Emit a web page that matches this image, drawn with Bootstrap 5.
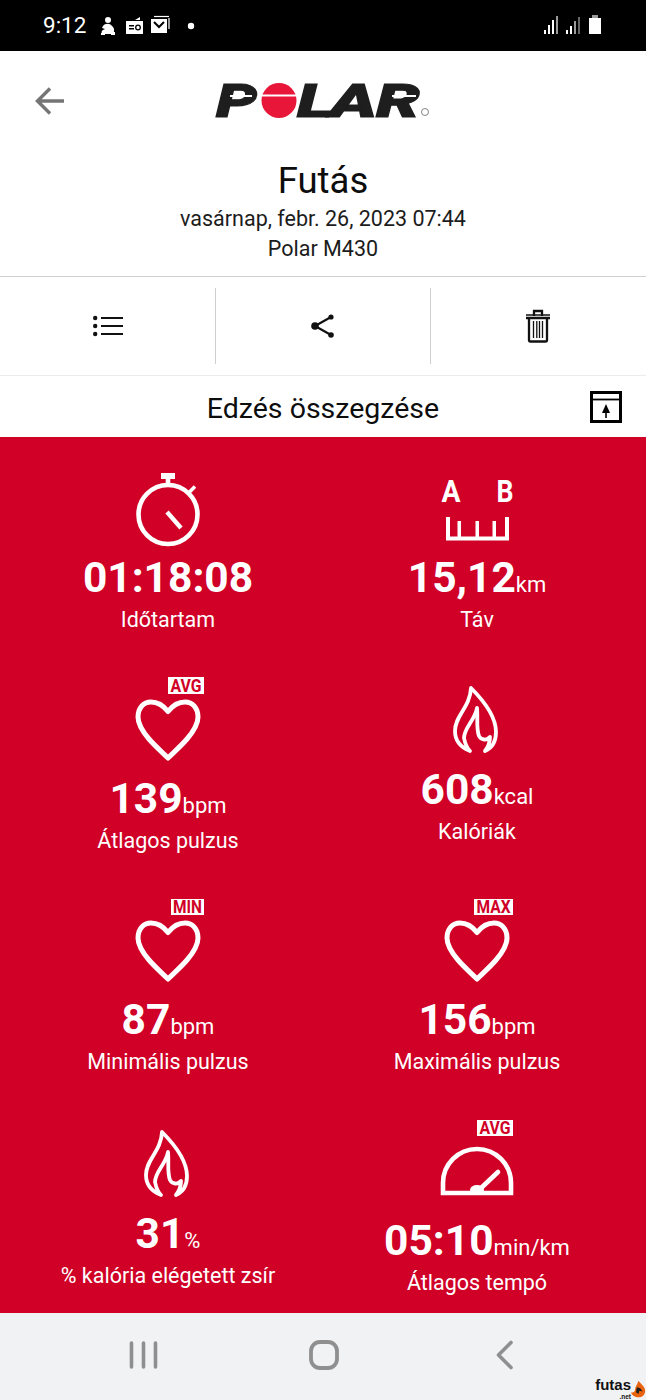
<!DOCTYPE html>
<html lang="hu">
<head>
<meta charset="utf-8">
<title>Polar Flow – Edzés összegzése</title>
<link href="https://cdn.jsdelivr.net/npm/bootstrap@5.3.0/dist/css/bootstrap.min.css" rel="stylesheet">
<style>
html,body{margin:0;height:1400px;overflow:hidden;background:#fff;}
body{font-family:Roboto,"Liberation Sans",sans-serif;color:#0d0d0d;}
.app-shell{width:646px;height:1400px;position:relative;overflow:hidden;display:flex;flex-direction:column;}
.status-strip{height:51px;background:#000;color:#fff;padding:0 44px 0 43px;flex:none;}
.clock{font-size:22.5px;line-height:1;margin-right:13px;}
.head-block{height:226px;border-bottom:1px solid #cfcfcf;flex:none;}
.logo-row{height:100px;padding-left:35px;margin-bottom:10px;}
.logo-svg{margin-left:151px;display:block;overflow:visible;}
.sport-name{font-size:36.500px;line-height:40px;margin-bottom:3px;}
.sport-line{font-size:21.500px;line-height:30px;color:#1c1c1c;}
.tool-row{height:99px;border-bottom:1px solid #ececec;padding:11px 0;flex:none;}
.tool-cell{width:215px;flex:none;}
.tool-cell+.tool-cell{border-left:1px solid #cfcfcf;}
.sum-bar{height:61px;display:grid;grid-template-columns:1fr auto 1fr;align-items:center;padding-right:24px;flex:none;}
.sum-title{font-size:28.500px;line-height:1;padding-left:24px;padding-top:5px;}
.stats-panel{height:876px;flex:none;background:#d00026;color:#fff;padding:20px 14px 0 13.500px;display:grid;grid-template-columns:309px 309px;grid-template-rows:221px 221px 221px 193px;}
.stat-box{display:flex;flex-direction:column;align-items:center;text-align:center;}
.stat-art{display:block;width:100px;height:98px;overflow:visible;flex:none;}
.stat-art.low{height:89px;}
.stat-art.mid{height:90.500px;}
.stat-num{font-size:42.500px;font-weight:700;line-height:45px;height:45px;white-space:nowrap;}
.stat-unit{font-size:22px;font-weight:400;line-height:1;}
.stat-name{font-size:21.500px;line-height:39px;white-space:nowrap;}
.sys-nav{height:87px;background:#f1f2f4;position:relative;flex:none;}
.mark-net{position:absolute;right:0;bottom:0;display:flex;align-items:flex-start;color:#111;font-family:"Liberation Sans",sans-serif;font-weight:700;}
.mark-net-text{display:flex;flex-direction:column;align-items:flex-end;}
.mark-net-main{font-size:15px;line-height:17px;height:17px;}
.mark-net-sub{font-size:6.500px;line-height:7px;height:7px;}
.mark-net-fig{margin-top:3px;}
</style>
</head>
<body>
<div class="app-shell">

  <div class="status-strip d-flex align-items-center">
    <span class="clock">9:12</span>
    <svg width="120" height="24" viewBox="0 0 120 24" fill="#fff" class="d-block">
      <circle cx="9" cy="6" r="3"/><path d="M4 12c2-3 7-3 9 0 3 2 3 8-1 8H5c-3 0-3-3-1-4l2-1-3-1z"/><path d="M2 19h4v2H2zM12 18h4v3h-4z"/>
      <path d="M27 7h17v13H27z"/><path d="M36 6l5-3v3z"/><path d="M30 11h5v1.500h-5zM30 14h5v1.500h-5z" fill="#000"/><circle cx="39" cy="13.500" r="2.300" fill="none" stroke="#000" stroke-width="1.300"/>
      <path d="M52 5h16v14H52z"/><path d="M55 8l5 5 5-5" fill="none" stroke="#000" stroke-width="2"/><path d="M70 4v11" stroke="#fff" stroke-width="1.200"/><path d="M55 2.500h15" stroke="#fff" stroke-width="1.200"/>
      <circle cx="92" cy="12" r="3.200"/>
    </svg>
    <svg width="58" height="24" viewBox="0 0 58 24" class="d-block ms-auto">
      <g fill="#fff"><rect x="0" y="16" width="2" height="4"/><rect x="4" y="11" width="2" height="9"/><rect x="8" y="6" width="2" height="14"/><rect x="12" y="2" width="2" height="18" fill="#9a9a9a"/>
      <rect x="22" y="16" width="2" height="4"/><rect x="26" y="12" width="2" height="8"/><rect x="30" y="7" width="2" height="13" fill="#9a9a9a"/><rect x="34" y="3" width="2" height="17" fill="#666"/>
      <rect x="45" y="4" width="12" height="16"/><rect x="48" y="1" width="6" height="3" fill="#9a9a9a"/></g>
    </svg>
  </div>

  <div class="head-block text-center">
    <div class="logo-row d-flex align-items-center">
      <svg width="30" height="30" viewBox="0 0 30 30" class="d-block flex-none" fill="none" stroke="#757575" stroke-width="3.400">
        <path d="M29 15H3M15 2.500 2.500 15 15 27.500"/>
      </svg>
      <svg class="logo-svg" width="216" height="60" viewBox="0 0 216 60">
        <g font-family="Roboto" font-weight="900" font-style="italic" font-size="46" fill="#1e1e1e" stroke="#1e1e1e" stroke-width="1">
          <text x="0" y="46" textLength="41" lengthAdjust="spacingAndGlyphs">P</text>
          <text x="81" y="46" textLength="36" lengthAdjust="spacingAndGlyphs">L</text>
          <text x="114" y="46" textLength="47" lengthAdjust="spacingAndGlyphs">A</text>
          <text x="160" y="46" textLength="44" lengthAdjust="spacingAndGlyphs">R</text>
        </g>
        <circle cx="63" cy="29.500" r="17.500" fill="#e8173a"/>
        <rect x="46" y="23.500" width="34" height="2" fill="#fff"/>
        <rect x="14" y="24" width="22" height="2" fill="#fff"/>
        <rect x="176" y="24" width="24" height="2" fill="#fff"/>
        <circle cx="209" cy="41" r="3.500" fill="none" stroke="#666" stroke-width=".8"/>
      </svg>
    </div>
    <div class="sport-name">Futás</div>
    <div class="sport-line">vasárnap, febr. 26, 2023 07:44</div>
    <div class="sport-line">Polar M430</div>
  </div>

  <div class="tool-row d-flex">
    <div class="tool-cell d-flex align-items-center justify-content-center">
      <svg width="30" height="22" viewBox="0 0 30 22" fill="#111"><circle cx="2.200" cy="3" r="2.200"/><circle cx="2.200" cy="11" r="2.200"/><circle cx="2.200" cy="19" r="2.200"/><rect x="8" y="2" width="22" height="2"/><rect x="8" y="10" width="22" height="2"/><rect x="8" y="18" width="22" height="2"/></svg>
    </div>
    <div class="tool-cell d-flex align-items-center justify-content-center">
      <svg width="26" height="26" viewBox="0 0 26 26" fill="#111" stroke="#111" stroke-width="2.200"><path d="M21 4 5 13l16 9" fill="none"/><circle cx="21" cy="4" r="2.600" stroke="none"/><circle cx="5" cy="13" r="3.800" stroke="none"/><circle cx="21" cy="22" r="2.800" stroke="none"/></svg>
    </div>
    <div class="tool-cell d-flex align-items-center justify-content-center">
      <svg width="26" height="34" viewBox="0 0 26 34" fill="none" stroke="#111" stroke-width="2.300"><path d="M1 9h24M9 7V2h8v5M4 9v22.500a1 1 0 0 0 1 1h16a1 1 0 0 0 1-1V9"/><path d="M1 6h24" stroke-width="1.500"/><path d="M8.500 12v17M11.800 12v17M14.500 12v17M17.500 12v17" stroke-width="1.300"/></svg>
    </div>
  </div>

  <div class="sum-bar">
    <span></span>
    <div class="sum-title">Edzés összegzése</div>
    <svg class="ms-auto d-block" width="32" height="32" viewBox="0 0 32 32" fill="none" stroke="#000" stroke-width="3">
      <rect x="1.500" y="1.500" width="29" height="29"/><path d="M1 8.500h30" stroke-width="1.800"/><path d="M16 13l4 9h-8z" fill="#000" stroke="none"/><path d="M16 21v6" stroke-width="1.600"/>
    </svg>
  </div>

  <div class="stats-panel">

    <div class="stat-box">
      <svg class="stat-art" viewBox="0 0 100 98" fill="none" stroke="#fff">
        <circle cx="50" cy="57.500" r="29.500" stroke-width="4.600"/>
        <rect x="43" y="16" width="14" height="6" fill="#fff" stroke="none"/>
        <rect x="47.700" y="22" width="4.600" height="7" fill="#fff" stroke="none"/>
        <path d="M71.500 35 77 29.500" stroke-width="3.600"/>
        <path d="M49 55 63 71" stroke-width="4.400"/>
      </svg>
      <div class="stat-num">01:18:08</div>
      <div class="stat-name">Időtartam</div>
    </div>

    <div class="stat-box">
      <svg class="stat-art" viewBox="0 0 100 98" fill="#fff">
        <text x="14.500" y="45" font-family="Roboto" font-weight="700" font-size="32" textLength="19" lengthAdjust="spacingAndGlyphs">A</text>
        <text x="69.500" y="45" font-family="Roboto" font-weight="700" font-size="32" textLength="17" lengthAdjust="spacingAndGlyphs">B</text>
        <path d="M19 60h4v22h-4zM78 60h4v22h-4zM30.500 64h3.500v16h-3.500zM48.500 64h3.500v16h-3.500zM65.500 64h3.500v16h-3.500zM19 79.500h63v4H19z"/>
      </svg>
      <div class="stat-num">15,12<span class="stat-unit">km</span></div>
      <div class="stat-name">Táv</div>
    </div>

    <div class="stat-box">
      <svg class="stat-art" viewBox="0 0 100 98">
        <rect x="50" y="-1" width="36" height="17" fill="#fff"/>
        <text x="68" y="13.500" text-anchor="middle" fill="#d00026" font-family="Roboto" font-weight="700" font-size="17.500" textLength="31" lengthAdjust="spacingAndGlyphs">AVG</text>
        <path d="M50 33.500C45 27 39 24 33 24 25.500 24 20 30 20 39 20 47 25 54 31 61 37 68 44 74 50 80 56 74 63 68 69 61 75 54 80 47 80 39 80 30 74.500 24 67 24 61 24 55 27 50 33.500Z" fill="none" stroke="#fff" stroke-width="5" stroke-linejoin="round"/>
      </svg>
      <div class="stat-num">139<span class="stat-unit">bpm</span></div>
      <div class="stat-name">Átlagos pulzus</div>
    </div>

    <div class="stat-box">
      <svg class="stat-art low" viewBox="0 0 100 89">
        <path d="M43 73C33 69 28 62 28 53 28 37 43 30 44 10 53 19 69 36 69 54 69 63 65 70 58 73 61 69 63 64 63 59 60 63 54 62 52 58 49 50 51 40 50 30 48 42 37 50 37 60 38 65 40 70 43 73Z" fill="none" stroke="#fff" stroke-width="3.800" stroke-linejoin="round"/>
      </svg>
      <div class="stat-num">608<span class="stat-unit">kcal</span></div>
      <div class="stat-name">Kalóriák</div>
    </div>

    <div class="stat-box">
      <svg class="stat-art" viewBox="0 0 100 98">
        <rect x="53" y="0" width="33" height="16" fill="#fff"/>
        <text x="69.500" y="14" text-anchor="middle" fill="#d00026" font-family="Roboto" font-weight="700" font-size="17.500" textLength="29" lengthAdjust="spacingAndGlyphs">MIN</text>
        <path d="M50 33.500C45 27 39 24 33 24 25.500 24 20 30 20 39 20 47 25 54 31 61 37 68 44 74 50 80 56 74 63 68 69 61 75 54 80 47 80 39 80 30 74.500 24 67 24 61 24 55 27 50 33.500Z" fill="none" stroke="#fff" stroke-width="5" stroke-linejoin="round"/>
      </svg>
      <div class="stat-num">87<span class="stat-unit">bpm</span></div>
      <div class="stat-name">Minimális pulzus</div>
    </div>

    <div class="stat-box">
      <svg class="stat-art" viewBox="0 0 100 98">
        <rect x="47" y="0" width="39" height="16" fill="#fff"/>
        <text x="66.500" y="14" text-anchor="middle" fill="#d00026" font-family="Roboto" font-weight="700" font-size="17.500" textLength="34" lengthAdjust="spacingAndGlyphs">MAX</text>
        <path d="M50 33.500C45 27 39 24 33 24 25.500 24 20 30 20 39 20 47 25 54 31 61 37 68 44 74 50 80 56 74 63 68 69 61 75 54 80 47 80 39 80 30 74.500 24 67 24 61 24 55 27 50 33.500Z" fill="none" stroke="#fff" stroke-width="5" stroke-linejoin="round"/>
      </svg>
      <div class="stat-num">156<span class="stat-unit">bpm</span></div>
      <div class="stat-name">Maximális pulzus</div>
    </div>

    <div class="stat-box">
      <svg class="stat-art mid" viewBox="0 0 100 90.500">
        <path d="M43 75C33 71 28 64 28 55 28 39 43 32 44 12 53 21 69 38 69 56 69 65 65 72 58 75 61 71 63 66 63 61 60 65 54 64 52 60 49 52 51 42 50 32 48 44 37 52 37 62 38 67 40 72 43 75Z" fill="none" stroke="#fff" stroke-width="3.800" stroke-linejoin="round"/>
      </svg>
      <div class="stat-num">31<span class="stat-unit">%</span></div>
      <div class="stat-name">% kalória elégetett zsír</div>
    </div>

    <div class="stat-box">
      <svg class="stat-art" viewBox="0 0 100 98">
        <rect x="50" y="0" width="36" height="16" fill="#fff"/>
        <text x="68" y="14" text-anchor="middle" fill="#d00026" font-family="Roboto" font-weight="700" font-size="17.500" textLength="31" lengthAdjust="spacingAndGlyphs">AVG</text>
        <path d="M16 73V63A34 34 0 0 1 84 63V73Z" fill="none" stroke="#fff" stroke-width="4.600"/>
        <path d="M71 52 52 70" stroke="#fff" stroke-width="4.600" stroke-linecap="round"/>
        <ellipse cx="50" cy="70" rx="7" ry="5" fill="#fff"/>
      </svg>
      <div class="stat-num">05:10<span class="stat-unit">min/km</span></div>
      <div class="stat-name">Átlagos tempó</div>
    </div>

  </div>

  <div class="sys-nav">
    <svg width="646" height="87" viewBox="0 0 646 87" class="d-block" fill="none" stroke="#8f8f8f">
      <path d="M131.500 30v24M143.500 30v24M155.500 30v24" stroke-width="3.600" stroke-linecap="round"/>
      <rect x="311" y="29" width="26" height="26" rx="9" stroke-width="3.800"/>
      <path d="M511 29.500 498.500 42 511 54.500" stroke-width="3.600" stroke-linecap="round" stroke-linejoin="round"/>
    </svg>
    <div class="mark-net">
      <div class="mark-net-text"><span class="mark-net-main">futas</span><span class="mark-net-sub">.net</span></div>
      <svg class="mark-net-fig" width="15" height="20" viewBox="0 0 18 20"><path d="M9 0c2 3 8 7 8 12s-4 8-8 8-8-2-9-6c3 1 5-1 5-4s3-6 4-10z" fill="#e8630f"/><path d="M7 8l4 1 3 4-4-1-1 4-3-2z" fill="#1e1e1e"/></svg>
    </div>
  </div>

</div>
</body>
</html>
